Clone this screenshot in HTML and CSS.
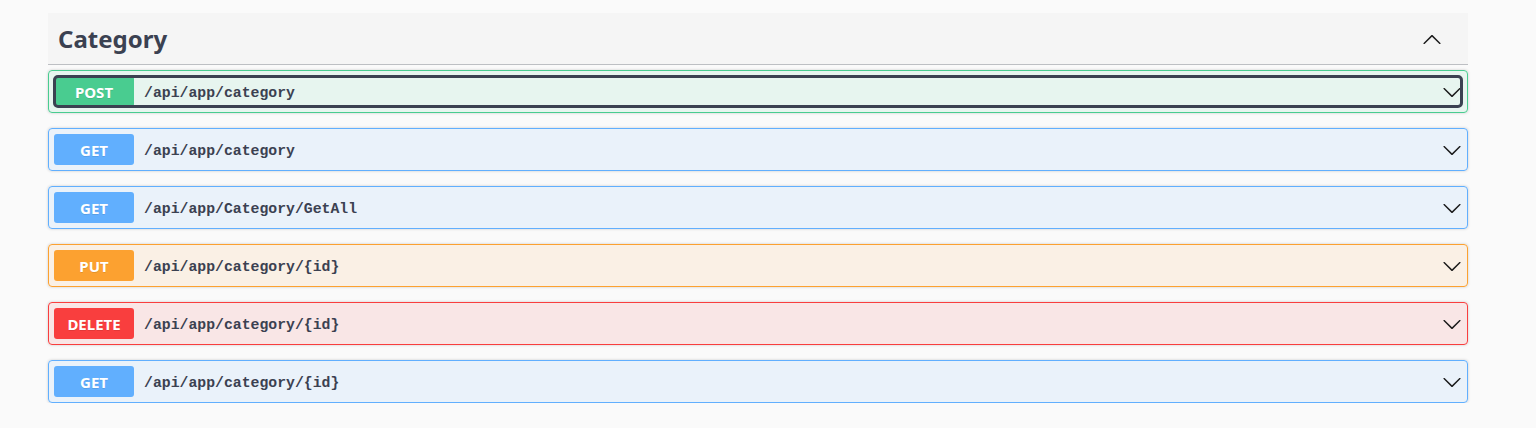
FILE: index.html
```html
<!DOCTYPE html>
<html>
<head>
<meta charset="utf-8">
<link rel="stylesheet" href="styles.css">
</head>
<body>
<div class="wrapper">
  <div class="tag-section">
    <h3 class="tag-header">
      <span class="tag-title">Category</span>
      <svg class="arrow" width="20" height="20" viewBox="0 0 20 20"><path d="M17.418 14.908c.272.268.709.268.979 0s.271-.701 0-.969l-7.908-7.83c-.27-.268-.707-.268-.979 0l-7.908 7.83c-.27.268-.27.701 0 .969.271.268.709.268.979 0L10 7.767l7.418 7.141z"/></svg>
    </h3>
    <div class="ops">
      <div class="op op-post">
        <div class="summary focused">
          <span class="method">POST</span>
          <span class="path">/api/app/category</span>
          <svg class="arrow" width="20" height="20" viewBox="0 0 20 20"><path d="M17.418 6.109c.272-.268.709-.268.979 0s.271.701 0 .969l-7.908 7.83c-.27.268-.707.268-.979 0l-7.908-7.830c-.27-.268-.27-.701 0-.969.271-.268.709-.268.979 0L10 13.25l7.418-7.141z"/></svg>
        </div>
      </div>
      <div class="op op-get">
        <div class="summary">
          <span class="method">GET</span>
          <span class="path">/api/app/category</span>
          <svg class="arrow" width="20" height="20" viewBox="0 0 20 20"><path d="M17.418 6.109c.272-.268.709-.268.979 0s.271.701 0 .969l-7.908 7.83c-.27.268-.707.268-.979 0l-7.908-7.83c-.27-.268-.27-.701 0-.969.271-.268.709-.268.979 0L10 13.25l7.418-7.141z"/></svg>
        </div>
      </div>
      <div class="op op-get">
        <div class="summary">
          <span class="method">GET</span>
          <span class="path">/api/app/Category/GetAll</span>
          <svg class="arrow" width="20" height="20" viewBox="0 0 20 20"><path d="M17.418 6.109c.272-.268.709-.268.979 0s.271.701 0 .969l-7.908 7.83c-.27.268-.707.268-.979 0l-7.908-7.83c-.27-.268-.27-.701 0-.969.271-.268.709-.268.979 0L10 13.25l7.418-7.141z"/></svg>
        </div>
      </div>
      <div class="op op-put">
        <div class="summary">
          <span class="method">PUT</span>
          <span class="path">/api/app/category/{id}</span>
          <svg class="arrow" width="20" height="20" viewBox="0 0 20 20"><path d="M17.418 6.109c.272-.268.709-.268.979 0s.271.701 0 .969l-7.908 7.83c-.27.268-.707.268-.979 0l-7.908-7.83c-.27-.268-.27-.701 0-.969.271-.268.709-.268.979 0L10 13.25l7.418-7.141z"/></svg>
        </div>
      </div>
      <div class="op op-delete">
        <div class="summary">
          <span class="method">DELETE</span>
          <span class="path">/api/app/category/{id}</span>
          <svg class="arrow" width="20" height="20" viewBox="0 0 20 20"><path d="M17.418 6.109c.272-.268.709-.268.979 0s.271.701 0 .969l-7.908 7.83c-.27.268-.707.268-.979 0l-7.908-7.83c-.27-.268-.27-.701 0-.969.271-.268.709-.268.979 0L10 13.25l7.418-7.141z"/></svg>
        </div>
      </div>
      <div class="op op-get">
        <div class="summary">
          <span class="method">GET</span>
          <span class="path">/api/app/category/{id}</span>
          <svg class="arrow" width="20" height="20" viewBox="0 0 20 20"><path d="M17.418 6.109c.272-.268.709-.268.979 0s.271.701 0 .969l-7.908 7.83c-.27.268-.707.268-.979 0l-7.908-7.83c-.27-.268-.27-.701 0-.969.271-.268.709-.268.979 0L10 13.25l7.418-7.141z"/></svg>
        </div>
      </div>
    </div>
  </div>
</div>
</body>
</html>
```

FILE: styles.css
```css
html, body {
  margin: 0;
  padding: 0;
  background: #fafafa;
}

.wrapper {
  padding: 13px 0 0 48px;
}

.tag-section {
  width: 1420px;
}

.tag-header {
  margin: 0;
  height: 51px;
  display: flex;
  align-items: center;
  justify-content: space-between;
  padding: 0 26px 0 10px;
  background: #f5f5f5;
  border-bottom: 1px solid rgba(59, 65, 81, 0.3);
}

.tag-title {
  font-family: "Noto Sans", "Open Sans", sans-serif;
  font-size: 24px;
  font-weight: 700;
  color: #3b4151;
}

.arrow {
  display: block;
  fill: #1b1b1b;
  flex: none;
}

.ops {
  display: flex;
  flex-direction: column;
  gap: 15px;
  padding-top: 5px;
}

.op {
  border: 1px solid;
  border-radius: 4px;
  box-shadow: 0 0 3px rgba(0, 0, 0, 0.19);
}

.summary {
  display: flex;
  align-items: center;
  padding: 5px;
  border-radius: 4px;
}

.summary.focused {
  outline: 3px solid #3b4151;
  outline-offset: -2px;
  margin: 5px;
  padding: 0;
}

.method {
  flex: none;
  width: 80px;
  height: 31px;
  display: flex;
  align-items: center;
  justify-content: center;
  border-radius: 3px;
  color: #fff;
  font-family: "Noto Sans", "Open Sans", sans-serif;
  font-size: 15px;
  font-weight: 700;
  text-shadow: 0 1px 0 rgba(0, 0, 0, 0.1);
}

.path {
  flex: 1;
  padding: 2px 10px 0;
  font-family: "Liberation Mono", monospace;
  font-size: 14.8px;
  font-weight: 700;
  color: #3b4151;
}

.op-post { border-color: #49cc90; background: rgba(73, 204, 144, 0.1); }
.op-post .method { background: #49cc90; }

.op-get { border-color: #61affe; background: rgba(97, 175, 254, 0.1); }
.op-get .method { background: #61affe; }

.op-put { border-color: #fca130; background: rgba(252, 161, 48, 0.1); }
.op-put .method { background: #fca130; }

.op-delete { border-color: #f93e3e; background: rgba(249, 62, 62, 0.1); }
.op-delete .method { background: #f93e3e; }
```
